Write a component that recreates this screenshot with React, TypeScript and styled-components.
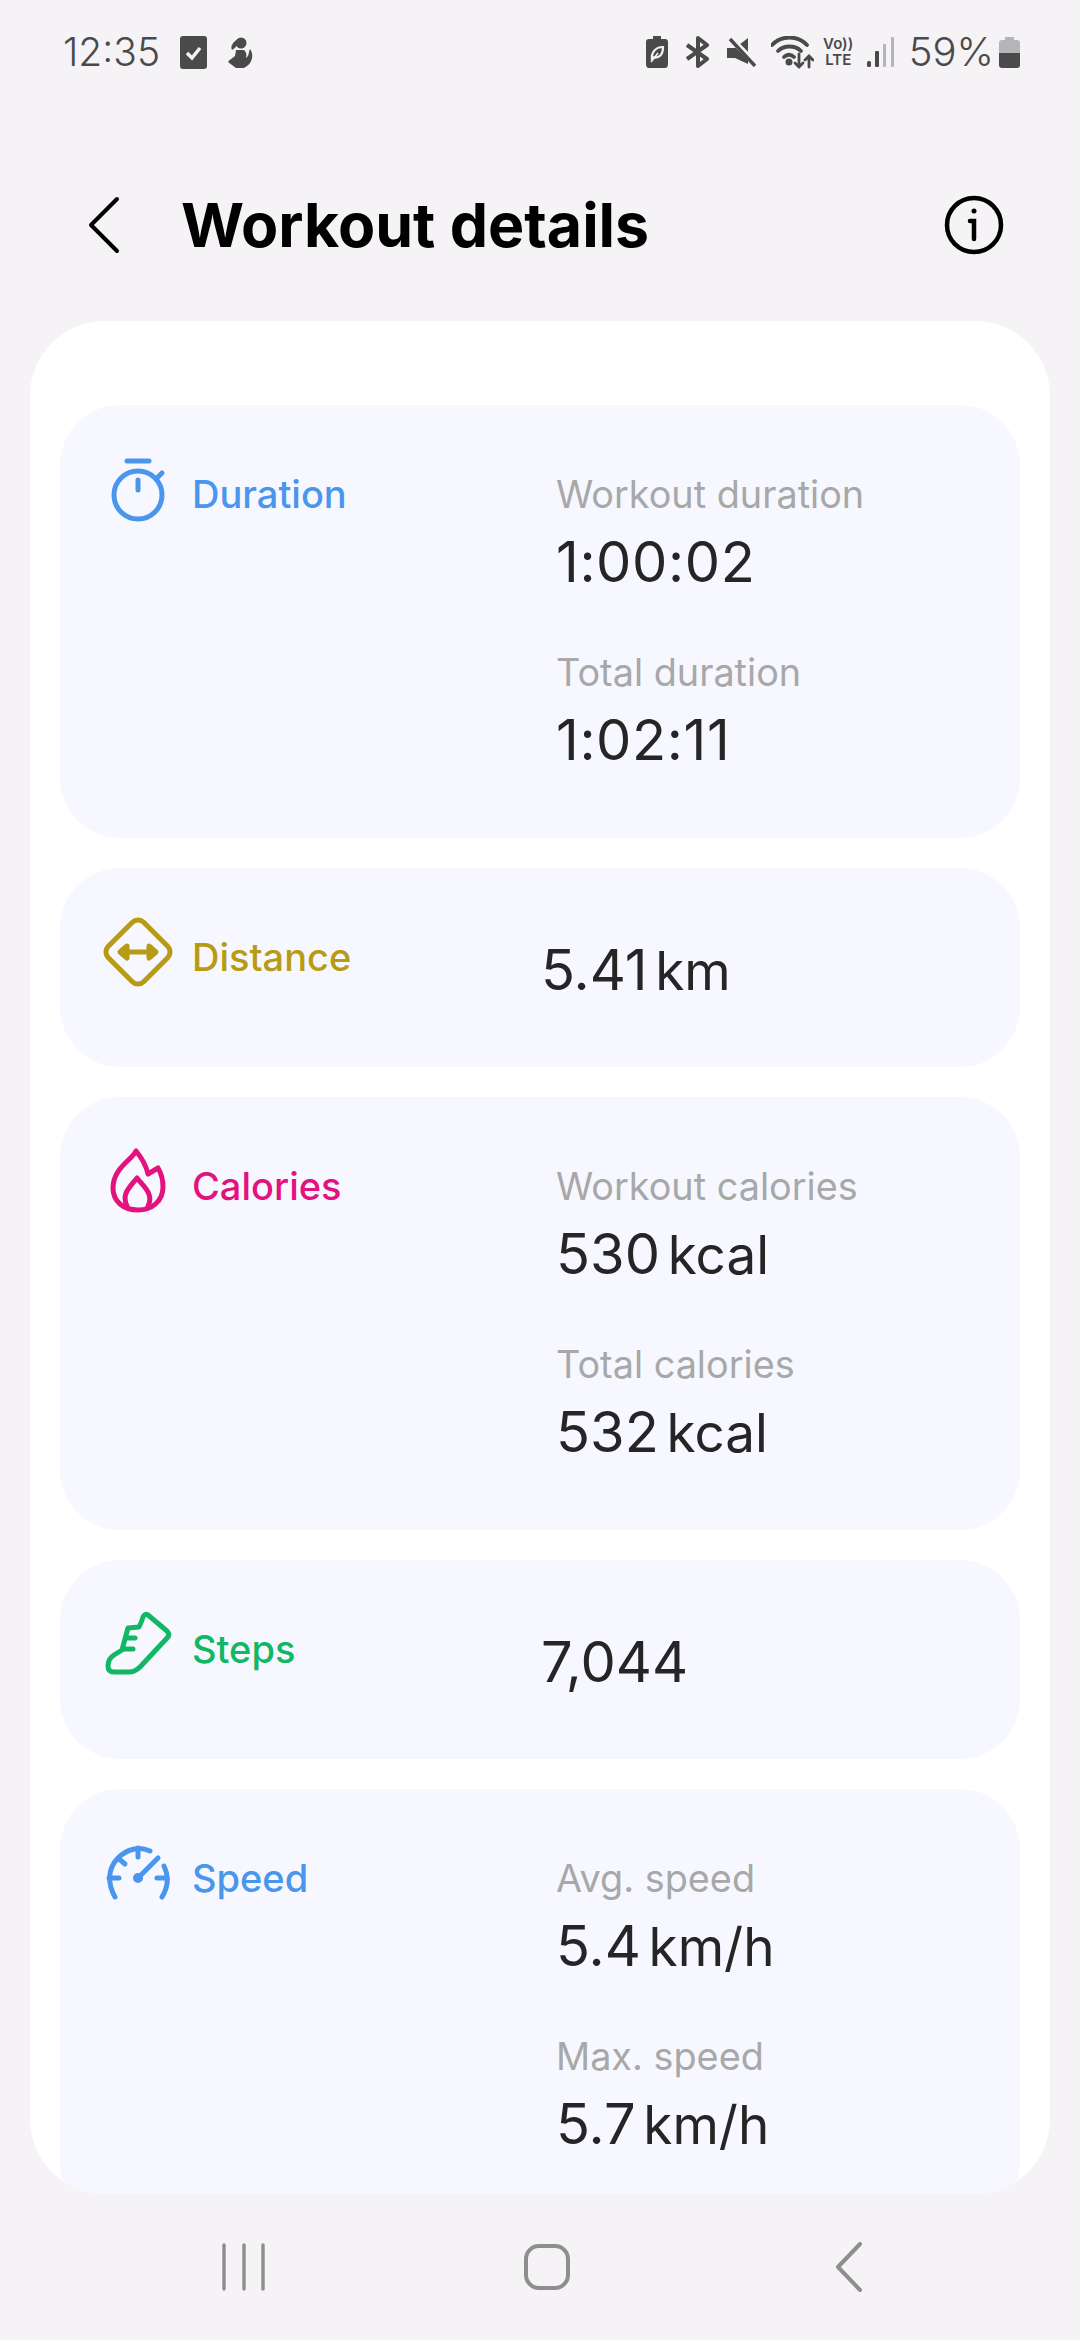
import React from 'react'
import styled, { createGlobalStyle } from 'styled-components'

const GlobalStyle = createGlobalStyle`
  html, body {
    margin: 0;
    padding: 0;
    background: #f6f3f7;
  }
  * {
    box-sizing: border-box;
  }
`

const BLUE = '#4a96ec'
const GOLD = '#b89b14'
const PINK = '#e3127f'
const GREEN = '#12b765'
const DARK = '#4a4a4a'

function StopwatchIcon() {
  return (
    <IconSvg viewBox="0 0 72 72" fill="none" stroke={BLUE} strokeWidth="5" strokeLinecap="round">
      <circle cx="36" cy="41" r="24" />
      <path d="M25 7H47" />
      <path d="M36 26V36" />
      <path d="M55 24L60 19" />
    </IconSvg>
  )
}

function DistanceIcon() {
  return (
    <IconSvg viewBox="0 0 72 72" fill="none" stroke={GOLD} strokeWidth="5" strokeLinejoin="round">
      <rect x="11" y="10" width="50" height="50" rx="8" transform="rotate(45 36 35)" />
      <path d="M23 35H49" />
      <path d="M25 29L18 35L25 41Z" fill={GOLD} />
      <path d="M47 29L54 35L47 41Z" fill={GOLD} />
    </IconSvg>
  )
}

function FlameIcon() {
  return (
    <IconSvg viewBox="0 0 72 72" fill="none" stroke={PINK} strokeWidth="5" strokeLinejoin="round" strokeLinecap="round">
      <path d="M34 5C30 14 11 22 11 42C11 56 22 64 36 64C50 64 61 55 61 41C61 33 59 27 56 22L46 28C44 19 39 11 34 5Z" />
      <path d="M25 60C19 48 28 41 35 32C42 41 52 48 46 60" />
    </IconSvg>
  )
}

function ShoeIcon() {
  return (
    <IconSvg viewBox="0 0 72 72" fill="none" stroke={GREEN} strokeWidth="5" strokeLinejoin="round" strokeLinecap="round">
      <path d="M46 6L65 22Q68 25 66 28L38 58Q33 63 27 63H12Q6 63 6 57Q6 50 12 46L20 41L26 19L37 18Q40 12 41 8Q43 4 46 6Z" />
      <path d="M26 29H33" />
      <path d="M21 40H31" />
    </IconSvg>
  )
}

function GaugeIcon() {
  return (
    <IconSvg viewBox="0 0 72 72" fill="none" stroke={BLUE} strokeWidth="5" strokeLinecap="round">
      <path d="M13 59C5 45 6 30 16 20C25 11 37 8 48 13" />
      <path d="M62 28C67 38 66 49 60 59" />
      <path d="M7 40H17" />
      <path d="M17 21L23 26" />
      <path d="M36 10V19" />
      <path d="M55 40H65" />
      <path d="M36 40L56 20" />
      <circle cx="36" cy="40" r="4" fill={BLUE} strokeWidth="2" />
    </IconSvg>
  )
}

const cards = [
  {
    title: 'Duration',
    color: BLUE,
    icon: <StopwatchIcon />,
    stats: [
      { label: 'Workout duration', value: '1:00:02' },
      { label: 'Total duration', value: '1:02:11' },
    ],
  },
  { title: 'Distance', color: GOLD, icon: <DistanceIcon />, stats: [{ value: '5.41', unit: 'km' }] },
  {
    title: 'Calories',
    color: PINK,
    icon: <FlameIcon />,
    stats: [
      { label: 'Workout calories', value: '530', unit: 'kcal' },
      { label: 'Total calories', value: '532', unit: 'kcal' },
    ],
  },
  { title: 'Steps', color: GREEN, icon: <ShoeIcon />, stats: [{ value: '7,044' }] },
  {
    title: 'Speed',
    color: BLUE,
    icon: <GaugeIcon />,
    stats: [
      { label: 'Avg. speed', value: '5.4', unit: 'km/h' },
      { label: 'Max. speed', value: '5.7', unit: 'km/h' },
    ],
  },
]

export default function App() {
  return (
    <Screen>
      <GlobalStyle />
      <StatusBar>
        <StatusGroup>
          <StatusText>12:35</StatusText>
          <svg width="27" height="33" viewBox="0 0 27 33" style={{ marginLeft: 20 }}>
            <rect width="27" height="33" rx="3" fill={DARK} />
            <path d="M7 17L12 22L20 12" fill="none" stroke="#f6f3f7" strokeWidth="3.5" />
          </svg>
          <svg width="26" height="31" viewBox="0 0 26 31" style={{ marginLeft: 20 }} fill={DARK}>
            <circle cx="14" cy="6" r="5.5" />
            <path d="M9 3C6 6 3 9 5 13C7 12 9 10 10 8Z" />
            <path d="M9 13H17C19 15 20 17 19 21L21 19C22 16 22 14 23 12C27 17 26 27 17 31H9L1 25C3 22 6 21 8 19Z" />
          </svg>
        </StatusGroup>
        <StatusGroup>
          <svg width="22" height="32" viewBox="0 0 22 32">
            <path d="M7 0H15V3H19Q22 3 22 6V28Q22 32 19 32H3Q0 32 0 28V6Q0 3 3 3H7Z" fill={DARK} />
            <path d="M6 24C5 17 9 11 17 11C17 19 13 23 6 21" fill="none" stroke="#f6f3f7" strokeWidth="2.2" />
            <path d="M5 26L12 17" stroke="#f6f3f7" strokeWidth="1.6" />
          </svg>
          <svg width="27" height="32" viewBox="0 0 27 32" style={{ marginLeft: 16 }} fill="none" stroke={DARK} strokeWidth="4" strokeLinejoin="round">
            <path d="M3 9L23 23L14 30V2L23 9L3 23" />
          </svg>
          <svg width="29" height="30" viewBox="0 0 29 30" style={{ marginLeft: 16 }}>
            <path d="M0 11H8L21 1V27L8 21H0Z" fill={DARK} />
            <path d="M1 -1L29 27" stroke="#f6f3f7" strokeWidth="6" />
            <path d="M3 2L28 29" stroke={DARK} strokeWidth="3.4" />
          </svg>
          <svg width="43" height="33" viewBox="0 0 43 33" style={{ marginLeft: 15 }} fill="none" stroke={DARK} strokeWidth="3.8" strokeLinecap="round">
            <path d="M1 9C10 -1 27 -1 36 9" />
            <path d="M7 15C13 9 24 9 30 15" />
            <path d="M13 21C16 18 20 18 23 21" />
            <circle cx="18" cy="26" r="1.6" fill={DARK} />
            <path d="M28 18V31M24 27L28 31L32 27" strokeWidth="2.8" />
            <path d="M38 31V20M34 24L38 20L42 24" strokeWidth="2.8" />
          </svg>
          <Volte>
            <span>Vo))</span>
            <span>LTE</span>
          </Volte>
          <svg width="27" height="30" viewBox="0 0 27 30" style={{ marginLeft: 13 }}>
            <rect x="0" y="24" width="4" height="6" rx="1.5" fill={DARK} />
            <rect x="8" y="14" width="4" height="16" rx="1" fill={DARK} />
            <rect x="16" y="7" width="3" height="23" rx="1" fill="#b5b5b9" />
            <rect x="24" y="0" width="3" height="30" rx="1" fill="#b5b5b9" />
          </svg>
          <PercentText>59%</PercentText>
          <svg width="21" height="31" viewBox="0 0 21 31" style={{ marginLeft: 5 }}>
            <path d="M6 0H15V3H18Q21 3 21 6V16H0V6Q0 3 3 3H6Z" fill="#b5b5b9" />
            <path d="M0 16H21V28Q21 31 18 31H3Q0 31 0 28Z" fill={DARK} />
          </svg>
        </StatusGroup>
      </StatusBar>

      <Header>
        <svg width="60" height="60" viewBox="0 0 60 60" fill="none" stroke="#000" strokeWidth="4" strokeLinecap="round" strokeLinejoin="round">
          <path d="M44 4L18 30L44 56" />
        </svg>
        <Title>Workout details</Title>
        <svg width="60" height="60" viewBox="0 0 60 60" fill="none" stroke="#000" strokeWidth="4.5" strokeLinecap="round">
          <circle cx="30" cy="30" r="27" />
          <path d="M26 26H30V44" />
          <circle cx="30" cy="16" r="2.5" fill="#000" stroke="none" />
        </svg>
      </Header>

      <Panel>
        {cards.map((card) => {
          const single = card.stats.length === 1
          return (
            <Card key={card.title}>
              <CardHead $single={single}>
                {card.icon}
                <CardTitle $color={card.color}>{card.title}</CardTitle>
              </CardHead>
              <Stats $single={single}>
                {card.stats.map((stat) => (
                  <div key={stat.label ?? stat.value}>
                    {stat.label && <StatLabel>{stat.label}</StatLabel>}
                    <StatValue $time={stat.value.includes(':')}>
                      {stat.value} {stat.unit && <Unit>{stat.unit}</Unit>}
                    </StatValue>
                  </div>
                ))}
              </Stats>
            </Card>
          )
        })}
      </Panel>

      <NavBar>
        <svg width="60" height="50" viewBox="0 0 60 50" fill="none" stroke="#8e8e8e" strokeWidth="3.4" strokeLinecap="round">
          <path d="M10 3V47M30 3V47M49 3V47" />
        </svg>
        <svg width="60" height="50" viewBox="0 0 60 50" fill="none" stroke="#8e8e8e" strokeWidth="4">
          <rect x="9" y="4" width="42" height="42" rx="13" />
        </svg>
        <svg width="60" height="50" viewBox="0 0 60 50" fill="none" stroke="#8e8e8e" strokeWidth="4" strokeLinecap="round" strokeLinejoin="round">
          <path d="M40 2L18 25L40 48" />
        </svg>
      </NavBar>
    </Screen>
  )
}

const Screen = styled.div`
  width: 1080px;
  height: 2340px;
  display: flex;
  flex-direction: column;
  overflow: hidden;
  background: #f6f3f7;
  font-family: Inter, 'Noto Sans', sans-serif;
`
const StatusBar = styled.div`
  height: 104px;
  flex: none;
  display: flex;
  align-items: center;
  justify-content: space-between;
  padding: 0 60px 0 63px;
`
const StatusGroup = styled.div`
  display: flex;
  align-items: center;
`
const StatusText = styled.span`
  font-size: 39px;
  font-weight: 300;
  line-height: 44px;
  color: ${DARK};
`
const PercentText = styled(StatusText)`
  margin-left: 15px;
  font-size: 40px;
`
const Volte = styled.div`
  display: flex;
  flex-direction: column;
  align-items: center;
  width: 31px;
  margin-left: 9px;
  font-size: 15px;
  font-weight: 600;
  line-height: 16px;
  color: ${DARK};
`
const Header = styled.header`
  height: 217px;
  flex: none;
  display: flex;
  align-items: center;
  padding: 25px 76px 0 73px;
`
const Title = styled.h1`
  flex: 1;
  margin: 0 0 0 48px;
  font-size: 60.8px;
  font-weight: 700;
  line-height: 72px;
  color: #000;
`
const Panel = styled.main`
  flex: 1;
  min-height: 0;
  margin: 0 30px;
  padding: 84px 30px 0;
  display: flex;
  flex-direction: column;
  gap: 30px;
  background: #fff;
  border-radius: 75px;
  overflow: hidden;
`
const Card = styled.section`
  flex: none;
  display: flex;
  padding: 0 42px;
  background: #f7f8ff;
  border-radius: 60px;
`
const CardHead = styled.div<{ $single: boolean }>`
  flex: none;
  width: ${(props) => (props.$single ? 439 : 454)}px;
  display: flex;
  align-items: flex-start;
  gap: 18px;
  padding-top: 49px;
`
const IconSvg = styled.svg`
  width: 72px;
  height: 72px;
  flex: none;
`
const CardTitle = styled.span<{ $color: string }>`
  margin-top: 16px;
  font-size: 38px;
  font-weight: 500;
  line-height: 48px;
  color: ${(props) => props.$color};
`
const Stats = styled.div<{ $single: boolean }>`
  display: flex;
  flex-direction: column;
  gap: 44px;
  padding: ${(props) => (props.$single ? '58px 0 55px' : '65px 0 56px')};
`
const StatLabel = styled.div`
  font-size: 37.8px;
  font-weight: 400;
  line-height: 48px;
  color: #a8a8a8;
`
const StatValue = styled.div<{ $time: boolean }>`
  padding-top: 2px;
  font-size: 56px;
  font-weight: 400;
  line-height: 84px;
  letter-spacing: ${(props) => (props.$time ? '0.6px' : '0')};
  word-spacing: -8px;
  color: #252525;
`
const Unit = styled.span`
  font-size: 53px;
  line-height: 1;
`
const NavBar = styled.nav`
  height: 146px;
  flex: none;
  display: flex;
  align-items: center;
  justify-content: space-between;
  padding: 0 200px 0 214px;
`
